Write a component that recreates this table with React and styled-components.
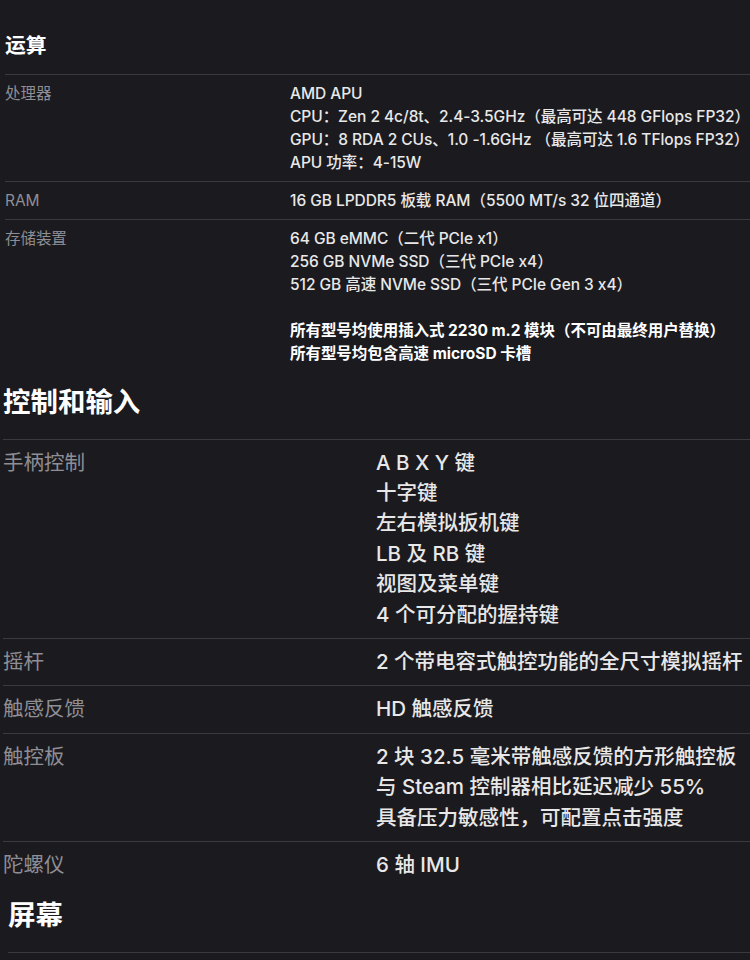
import React from 'react';
import styled, { createGlobalStyle } from 'styled-components';

const GlobalStyle = createGlobalStyle`
  html, body {
    margin: 0;
    padding: 0;
    background: #1b1a1f;
  }
  body {
    font-family: Inter, "Noto Sans CJK SC", sans-serif;
    font-feature-settings: "calt" 0;
  }
`;

const Page = styled.div`
  width: 750px;
  height: 960px;
  overflow: hidden;
  background: #1b1a1f;
`;

const Section = styled.section`
  margin-top: ${p => p.$top}px;
  margin-left: ${p => p.$indent}px;
  font-size: ${p => p.$size}px;
  line-height: ${p => p.$line}px;
  letter-spacing: ${p => p.$track}px;
`;

const Heading = styled.h2`
  margin: 0;
  padding-bottom: 0.66em;
  font-size: 1.34em;
  line-height: 1.3;
  font-weight: 700;
  color: #ffffff;
  letter-spacing: 0;
`;

const Row = styled.div`
  display: grid;
  grid-template-columns: ${p => p.$label}px 1fr;
  border-top: 1px solid #3b3a40;
  padding: ${p => p.$pad}px 0;
`;

const Rule = styled.div`
  border-top: 1px solid #3b3a40;
`;

const Label = styled.div`
  color: #8e8e94;
`;

const Values = styled.div`
  color: #e8e8e8;
  font-weight: 500;
  white-space: nowrap;
`;

const Line = styled.div`
  min-height: 1em;
  font-weight: ${p => (p.$bold ? 700 : 'inherit')};
  color: ${p => (p.$bold ? '#ffffff' : 'inherit')};
`;

const Spacer = styled.div`
  height: ${p => p.$line}px;
`;

const sections = [
  {
    title: '运算',
    top: 33,
    indent: 5,
    size: 15.5,
    line: 23,
    track: -0.05,
    label: 285,
    pad: 7,
    rows: [
      {
        label: '处理器',
        lines: [
          'AMD APU',
          'CPU：Zen 2 4c/8t、2.4-3.5GHz（最高可达 448 GFlops FP32）',
          'GPU：8 RDA 2 CUs、1.0 -1.6GHz （最高可达 1.6 TFlops FP32）',
          'APU 功率：4-15W',
        ],
      },
      { label: 'RAM', lines: ['16 GB LPDDR5 板载 RAM（5500 MT/s 32 位四通道）'] },
      {
        label: '存储装置',
        lines: [
          '64 GB eMMC（二代 PCIe x1）',
          '256 GB NVMe SSD（三代 PCIe x4）',
          '512 GB 高速 NVMe SSD（三代 PCIe Gen 3 x4）',
          null,
          { bold: true, text: '所有型号均使用插入式 2230 m.2 模块（不可由最终用户替换）' },
          { bold: true, text: '所有型号均包含高速 microSD 卡槽' },
        ],
      },
    ],
  },
  {
    title: '控制和输入',
    top: 13,
    indent: 3,
    size: 20.5,
    line: 30.4,
    track: 0,
    label: 373,
    pad: 8,
    rows: [
      {
        label: '手柄控制',
        lines: ['A B X Y 键', '十字键', '左右模拟扳机键', 'LB 及 RB 键', '视图及菜单键', '4 个可分配的握持键'],
      },
      { label: '摇杆', lines: ['2 个带电容式触控功能的全尺寸模拟摇杆'] },
      { label: '触感反馈', lines: ['HD 触感反馈'] },
      {
        label: '触控板',
        lines: ['2 块 32.5 毫米带触感反馈的方形触控板', '与 Steam 控制器相比延迟减少 55%', '具备压力敏感性，可配置点击强度'],
      },
      { label: '陀螺仪', lines: ['6 轴 IMU'] },
    ],
  },
  {
    title: '屏幕',
    top: 10,
    indent: 8,
    size: 20.5,
    line: 30.4,
    track: 0,
    label: 368,
    pad: 8,
    rows: [],
  },
];

function SpecSection({ s }) {
  return (
    <Section $top={s.top} $indent={s.indent} $size={s.size} $line={s.line} $track={s.track}>
      <Heading>{s.title}</Heading>
      {s.rows.length === 0 && <Rule />}
      {s.rows.map(row => (
        <Row key={row.label} $label={s.label} $pad={s.pad}>
          <Label>{row.label}</Label>
          <Values>
            {row.lines.map((l, i) => {
              if (l === null) return <Spacer key={i} $line={s.line} />;
              if (typeof l === 'object') return <Line key={i} $bold={l.bold}>{l.text}</Line>;
              return <Line key={i}>{l}</Line>;
            })}
          </Values>
        </Row>
      ))}
    </Section>
  );
}

export default function App() {
  return (
    <Page>
      <GlobalStyle />
      {sections.map(s => (
        <SpecSection key={s.title} s={s} />
      ))}
    </Page>
  );
}
